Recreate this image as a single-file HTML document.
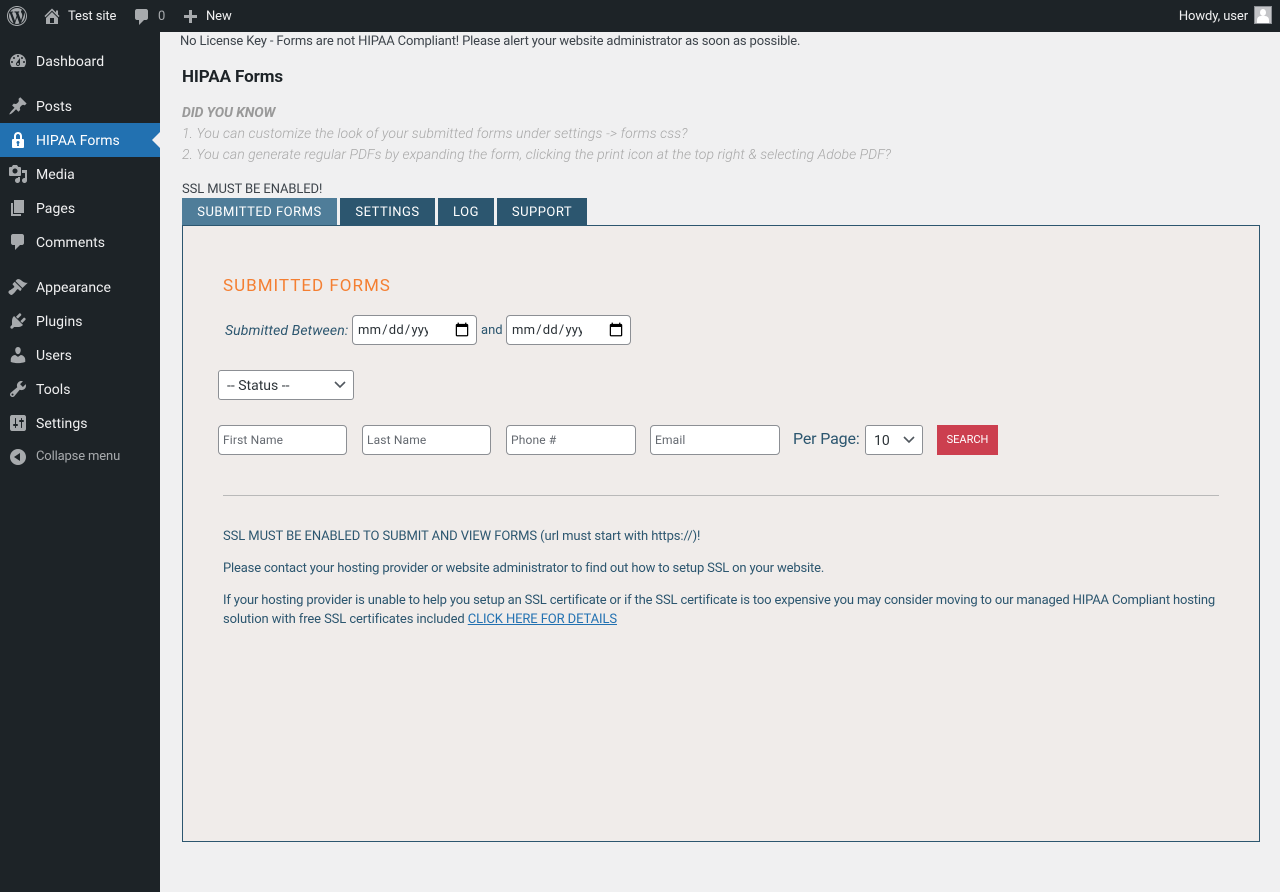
<!DOCTYPE html>
<html lang="en"><head><meta charset="utf-8"><title>HIPAA Forms</title>
<style>
*{box-sizing:border-box}
html,body{margin:0;padding:0;width:1280px;height:892px;overflow:hidden;background:#f0f0f1;font-family:Roboto,"Liberation Sans",sans-serif;font-size:13px;color:#3c434a}
.a{position:absolute;white-space:nowrap;line-height:18px}
#bar{position:absolute;left:0;top:0;width:1280px;height:32px;background:#1d2327}
#side{position:absolute;left:0;top:32px;width:160px;height:860px;background:#1d2327}
#act{position:absolute;left:0;top:123px;width:160px;height:34px;background:#2271b1}
#tri{position:absolute;left:152px;top:132px;width:0;height:0;border:8px solid transparent;border-left:0;border-right-color:#f0f0f1}
svg{position:absolute;fill:#a7aaad}
.m{color:#f0f0f1;font-size:14px;left:36px;letter-spacing:.05px}
.b{color:#f0f0f1;font-size:13px;letter-spacing:-.1px}
.tab{position:absolute;top:198px;height:27px;background:#2c566f;color:#fff;font-size:13px;line-height:29px;text-align:center;letter-spacing:.5px;white-space:nowrap}
#panel{position:absolute;left:182px;top:225px;width:1078px;height:617px;background:#f0ecea;border:1px solid #2c566f}
.t{color:#2c566f}
.i{position:absolute;top:425px;height:30px;background:#fff;border:1px solid #8c8f94;border-radius:4px;padding:0 4px;margin:0;font:12px Roboto,"Liberation Sans",sans-serif;letter-spacing:.15px;color:#2c3338}
.i::placeholder{color:#646970;opacity:1}
input[type=date]{position:absolute;top:315px;width:125px;height:30px;background:#fff;border:1px solid #8c8f94;border-radius:4px;padding:0 4px;margin:0;font:13px Roboto,"Liberation Sans",sans-serif;letter-spacing:.2px;color:#2c3338}
input[type=date]::-webkit-datetime-edit{overflow:hidden;max-width:71px;display:block}
input[type=date]::-webkit-calendar-picker-indicator{width:16px;height:16px;padding:0;margin:0 2px 0 auto}
.s{position:absolute;background:#fff;border:1px solid #8c8f94;border-radius:3px;height:30px;color:#2c3338;font-size:14px;line-height:30px;padding-left:8px}
.c{position:absolute;fill:none;stroke:#50575e;stroke-width:1.6}
</style></head><body>
<div id="bar"></div><div id="side"></div><div id="act"></div><div id="tri"></div>

<svg style="left:7px;top:6px" width="20" height="20" viewBox="0 0 20 20"><path d="M20 10c0-5.52-4.48-10-10-10S0 4.48 0 10s4.48 10 10 10 10-4.48 10-10zM10 1.01c4.97 0 8.99 4.02 8.99 8.99s-4.02 8.99-8.99 8.99S1.01 14.97 1.01 10 5.03 1.01 10 1.01zM8.01 14.82L4.96 6.61c.49-.03 1.05-.08 1.05-.08.43-.05.38-1.01-.06-.99 0 0-1.29.1-2.13.1-.15 0-.33 0-.52-.01 1.44-2.17 3.9-3.6 6.7-3.6 2.09 0 3.99.79 5.41 2.09-.6-.08-1.45.35-1.45 1.42 0 .66.38 1.22.79 1.88.31.54.5 1.22.5 2.21 0 1.34-1.27 4.48-1.27 4.48l-2.71-7.5c.48-.03.75-.16.75-.16.43-.05.38-1.1-.05-1.08 0 0-1.3.11-2.14.11-.78 0-2.11-.11-2.11-.11-.43-.02-.48 1.06-.05 1.08l.84.08 1.12 3.04zm6.02 2.15L16.64 10s.67-1.69.39-3.81c.63 1.14.94 2.42.94 3.81 0 2.96-1.56 5.58-3.94 6.97zM2.68 6.77L6.5 17.25c-2.67-1.3-4.47-4.08-4.47-7.25 0-1.16.2-2.23.65-3.23zm7.45 4.53l2.29 6.25c-.75.27-1.57.42-2.42.42-.72 0-1.41-.11-2.06-.3z"/></svg>
<svg style="left:42px;top:6px" width="20" height="20" viewBox="0 0 20 20"><path d="M16 8.5l1.53 1.53-1.06 1.06L10 4.62l-6.47 6.47-1.06-1.06L10 2.5l4 4v-2h2v4zm-6-2.46l6 5.99V18H4v-5.97zM12 17v-5H8v5h4z"/></svg>
<div class="a b" style="left:68px;top:8px">Test site</div>
<svg style="left:132px;top:7px" width="20" height="20" viewBox="0 0 20 20"><path d="M5 2h9c1.1 0 2 .9 2 2v7c0 1.1-.9 2-2 2h-2l-5 5v-5H5c-1.1 0-2-.9-2-2V4c0-1.1.9-2 2-2z"/></svg>
<div class="a b" style="left:158px;top:8px;color:#a7aaad">0</div>
<svg style="left:180px;top:8px" width="20" height="20" viewBox="0 0 20 20"><path d="M17 7v3h-5v5H9v-5H4V7h5V2h3v5h5z"/></svg>
<div class="a b" style="left:206px;top:8px">New</div>
<div class="a b" style="right:32px;top:8px">Howdy, user</div>
<div style="position:absolute;left:1254px;top:6px;width:18px;height:18px;background:#c3c4c7;border:1px solid #8c8f94;overflow:hidden"><div style="position:absolute;left:5px;top:2px;width:6px;height:7px;background:#fff;border-radius:50%"></div><div style="position:absolute;left:2px;top:9px;width:12px;height:8px;background:#fff;border-radius:4px 4px 0 0"></div></div>

<svg style="left:8px;top:51px" width="20" height="20" viewBox="0 0 20 20"><path d="M3.76 16h12.48c1.1-1.37 1.76-3.11 1.76-5 0-4.42-3.58-8-8-8s-8 3.58-8 8c0 1.89.66 3.63 1.76 5zM10 4c.55 0 1 .45 1 1s-.45 1-1 1-1-.45-1-1 .45-1 1-1zM6 6c.55 0 1 .45 1 1s-.45 1-1 1-1-.45-1-1 .45-1 1-1zm8 0c.55 0 1 .45 1 1s-.45 1-1 1-1-.45-1-1 .45-1 1-1zm-5.37 5.55L12 7v6c0 1.1-.9 2-2 2s-2-.9-2-2c0-.57.24-1.08.63-1.45zM4 10c.55 0 1 .45 1 1s-.45 1-1 1-1-.45-1-1 .45-1 1-1zm12 0c.55 0 1 .45 1 1s-.45 1-1 1-1-.45-1-1 .45-1 1-1zm-5 3c0-.55-.45-1-1-1s-1 .45-1 1 .45 1 1 1 1-.45 1-1z"/></svg>
<div class="a m" style="top:53px">Dashboard</div>
<svg style="left:8px;top:96px" width="20" height="20" viewBox="0 0 20 20"><path d="M10.44 3.02l1.82-1.82 6.36 6.35-1.83 1.82c-1.05-.68-2.48-.57-3.41.36l-.75.75c-.92.93-1.04 2.35-.35 3.41l-1.83 1.82-2.41-2.41-2.8 2.79c-.42.42-3.38 2.71-3.8 2.29s1.86-3.39 2.28-3.81l2.79-2.79L4.1 9.36l1.83-1.82c1.05.69 2.48.57 3.4-.36l.75-.75c.93-.92 1.05-2.35.36-3.41z"/></svg>
<div class="a m" style="top:98px">Posts</div>
<svg style="left:8px;top:130px;fill:#fff" width="20" height="20" viewBox="0 0 20 20"><path fill-rule="evenodd" d="M14 9h1c.55 0 1 .45 1 1v7c0 .55-.45 1-1 1H5c-.55 0-1-.45-1-1v-7c0-.55.45-1 1-1h1V6c0-2.21 1.79-4 4-4s4 1.79 4 4v3zm-2 0V6c0-1.1-.9-2-2-2s-2 .9-2 2v3h4zm-1 7l-.36-2.15c.51-.24.86-.75.86-1.35 0-.83-.67-1.5-1.5-1.5s-1.5.67-1.5 1.5c0 .6.35 1.11.86 1.35L9 16h2z"/></svg>
<div class="a m" style="top:132px;color:#fff">HIPAA Forms</div>
<svg style="left:8px;top:164px" width="20" height="20" viewBox="0 0 20 20"><path d="M13 11V4c0-.55-.45-1-1-1h-1.67L9 1H5L3.67 3H2c-.55 0-1 .45-1 1v7c0 .55.45 1 1 1h10c.55 0 1-.45 1-1zM7 4.5c1.38 0 2.5 1.12 2.5 2.5S8.38 9.5 7 9.5 4.5 8.38 4.5 7 5.62 4.5 7 4.5zM14 6h5v10.5c0 1.38-1.12 2.5-2.5 2.5S14 17.88 14 16.5s1.12-2.5 2.5-2.5c.17 0 .34.02.5.05V9h-3V6zm-4 8.05V13h2v3.5c0 1.38-1.12 2.5-2.5 2.5S7 17.88 7 16.5 8.12 14 9.5 14c.17 0 .34.02.5.05z"/></svg>
<div class="a m" style="top:166px">Media</div>
<svg style="left:8px;top:198px" width="20" height="20" viewBox="0 0 20 20"><path d="M6 15V2h10v13H6zm-1 1h8v2H3V5h2v11z"/></svg>
<div class="a m" style="top:200px">Pages</div>
<svg style="left:8px;top:232px" width="20" height="20" viewBox="0 0 20 20"><path d="M5 2h9c1.1 0 2 .9 2 2v7c0 1.1-.9 2-2 2h-2l-5 5v-5H5c-1.1 0-2-.9-2-2V4c0-1.1.9-2 2-2z"/></svg>
<div class="a m" style="top:234px">Comments</div>
<svg style="left:8px;top:277px" width="20" height="20" viewBox="0 0 20 20"><path d="M14.48 11.06L7.41 3.99l1.5-1.5c.5-.56 2.3-.47 3.51.32 1.21.8 1.43 1.28 2.91 2.1 1.18.64 2.45 1.26 4.45.85zm-.71.71L6.7 4.7 4.93 6.47c-.39.39-.39 1.02 0 1.41l1.06 1.06c.39.39.39 1.03 0 1.42-.6.6-1.43 1.11-2.21 1.69-.35.26-.7.53-1.01.84C1.43 13.23.4 14.08.43 15.07c.02.71.45 1.29 1.07 1.86.6.55 1.18 1.07 1.86 1.07 1 0 1.84-1 3.16-2.34.3-.31.58-.65.84-1.01.57-.78 1.08-1.62 1.68-2.21.39-.39 1.03-.39 1.42 0l1.06 1.06c.39.39 1.02.39 1.41 0z"/></svg>
<div class="a m" style="top:279px">Appearance</div>
<svg style="left:8px;top:311px" width="20" height="20" viewBox="0 0 20 20"><path d="M13.11 4.36L9.87 7.6 8 5.73l3.24-3.24c.35-.34 1.05-.2 1.56.32.52.51.66 1.21.31 1.55zm-8 1.77l.91-1.12 9.01 9.01-1.19.84c-.71.71-2.63 1.16-3.82 1.16H6.14L4.9 17.26c-.59.59-1.54.59-2.12 0-.59-.58-.59-1.53 0-2.12l1.24-1.24v-3.88c0-1.13.4-3.19 1.09-3.89zm7.26 3.97l3.24-3.24c.34-.35 1.04-.21 1.55.31.52.51.66 1.21.31 1.55l-3.24 3.25z"/></svg>
<div class="a m" style="top:313px">Plugins</div>
<svg style="left:8px;top:345px" width="20" height="20" viewBox="0 0 20 20"><path d="M10 9.25c-2.27 0-2.73-3.44-2.73-3.44C7 4.02 7.82 2 9.97 2c2.16 0 2.98 2.02 2.71 3.81 0 0-.41 3.44-2.68 3.44zm0 2.57L12.72 10c2.39 0 4.52 2.33 4.52 4.53v2.49s-3.65 1.13-7.24 1.13c-3.65 0-7.24-1.13-7.24-1.13v-2.49c0-2.25 1.94-4.48 4.47-4.48z"/></svg>
<div class="a m" style="top:347px">Users</div>
<svg style="left:8px;top:379px" width="20" height="20" viewBox="0 0 20 20"><path d="M16.68 9.77c-1.34 1.34-3.3 1.67-4.95.99l-5.41 6.52c-.99.99-2.59.99-3.58 0s-.99-2.59 0-3.57l6.52-5.42c-.68-1.65-.35-3.61.99-4.95 1.28-1.28 3.12-1.62 4.72-1.06l-2.89 2.89 2.82 2.82 2.86-2.87c.53 1.58.18 3.39-1.08 4.65zM3.81 16.21c.4.39 1.04.39 1.43 0 .4-.4.4-1.04 0-1.43-.39-.4-1.03-.4-1.43 0-.39.39-.39 1.03 0 1.43z"/></svg>
<div class="a m" style="top:381px">Tools</div>
<svg style="left:8px;top:413px" width="20" height="20" viewBox="0 0 20 20"><path d="M18 16V4c0-1.1-.9-2-2-2H4c-1.1 0-2 .9-2 2v12c0 1.1.9 2 2 2h12c1.1 0 2-.9 2-2zM8 11h1c.55 0 1 .45 1 1s-.45 1-1 1H8v1.5c0 .28-.22.5-.5.5s-.5-.22-.5-.5V13H6c-.55 0-1-.45-1-1s.45-1 1-1h1V5.5c0-.28.22-.5.5-.5s.5.22.5.5V11zm5-2h-1c-.55 0-1-.45-1-1s.45-1 1-1h1V5.5c0-.28.22-.5.5-.5s.5.22.5.5V7h1c.55 0 1 .45 1 1s-.45 1-1 1h-1v5.5c0 .28-.22.5-.5.5s-.5-.22-.5-.5V9z"/></svg>
<div class="a m" style="top:415px">Settings</div>
<svg style="left:8px;top:447px" width="20" height="20" viewBox="0 0 20 20"><path fill-rule="evenodd" d="M10 2c-4.42 0-8 3.58-8 8s3.58 8 8 8 8-3.58 8-8-3.58-8-8-8zM12 14l-6-4 6-4z"/></svg>
<div class="a" style="left:36px;top:447px;line-height:20px;color:#a7aaad;font-size:13px;letter-spacing:-.15px">Collapse menu</div>

<div class="a" style="left:180px;top:33px;font-size:13px;letter-spacing:-.14px">No License Key - Forms are not HIPAA Compliant! Please alert your website administrator as soon as possible.</div>
<div class="a" style="left:182px;top:68px;font-size:17px;font-weight:700;color:#1d2327;letter-spacing:-.1px">HIPAA Forms</div>
<div class="a" style="left:182px;top:104px;font-size:14px;font-weight:700;font-style:italic;color:#999;letter-spacing:-.1px">DID YOU KNOW</div>
<div class="a" style="left:182px;top:125px;font-size:14px;font-style:italic;color:#a8a8a8;letter-spacing:.1px;font-weight:300">1. You can customize the look of your submitted forms under settings -&gt; forms css?</div>
<div class="a" style="left:182px;top:146px;font-size:14px;font-style:italic;color:#a8a8a8;letter-spacing:.07px;font-weight:300">2. You can generate regular PDFs by expanding the form, clicking the print icon at the top right &amp; selecting Adobe PDF?</div>
<div class="a" style="left:182px;top:181px;font-size:13px;letter-spacing:-.1px">SSL MUST BE ENABLED!</div>

<div class="tab" style="left:182px;width:155px;background:#4f7d99">SUBMITTED FORMS</div>
<div class="tab" style="left:340px;width:95px">SETTINGS</div>
<div class="tab" style="left:438px;width:56px">LOG</div>
<div class="tab" style="left:497px;width:90px">SUPPORT</div>
<div id="panel"></div>

<div class="a" style="left:223px;top:277px;font-size:17px;color:#f47f32;letter-spacing:1px">SUBMITTED FORMS</div>
<div class="a t" style="left:225px;top:322px;font-size:14px;font-style:italic;letter-spacing:.12px">Submitted Between:</div>
<input type="date" style="left:352px">
<div class="a t" style="left:481px;top:322px;font-size:13px">and</div>
<input type="date" style="left:506px">

<div class="s" style="left:218px;top:370px;width:136px">-- Status --</div>
<svg class="c" style="left:332px;top:378px" width="16" height="14" viewBox="0 0 16 14"><path d="M3 4l5 5 5-5"/></svg>

<input class="i" style="left:218px;width:129px" placeholder="First Name">
<input class="i" style="left:362px;width:129px" placeholder="Last Name">
<input class="i" style="left:506px;width:130px" placeholder="Phone #">
<input class="i" style="left:650px;width:130px" placeholder="Email">
<div class="a t" style="left:793px;top:430px;font-size:16px;letter-spacing:-.15px">Per Page:</div>
<div class="s" style="left:865px;top:425px;width:58px">10</div>
<svg class="c" style="left:901px;top:433px" width="16" height="14" viewBox="0 0 16 14"><path d="M3 4l5 5 5-5"/></svg>
<div style="position:absolute;left:937px;top:425px;width:61px;height:30px;background:#cc3f4f;color:#fff;font-size:11px;line-height:29px;text-align:center">SEARCH</div>

<div style="position:absolute;left:223px;top:495px;width:996px;height:1px;background:#b9b9b9"></div>
<div class="a t" style="left:223px;top:528px;letter-spacing:-.09px">SSL MUST BE ENABLED TO SUBMIT AND VIEW FORMS (url must start with https://)!</div>
<div class="a t" style="left:223px;top:560px;letter-spacing:-.16px">Please contact your hosting provider or website administrator to find out how to setup SSL on your website.</div>
<div class="a t" style="left:223px;top:592px;letter-spacing:-.16px">If your hosting provider is unable to help you setup an SSL certificate or if the SSL certificate is too expensive you may consider moving to our managed HIPAA Compliant hosting</div>
<div class="a t" style="left:223px;top:611px;letter-spacing:-.105px">solution with free SSL certificates included <span style="color:#2271b1;text-decoration:underline">CLICK HERE FOR DETAILS</span></div>
</body></html>
